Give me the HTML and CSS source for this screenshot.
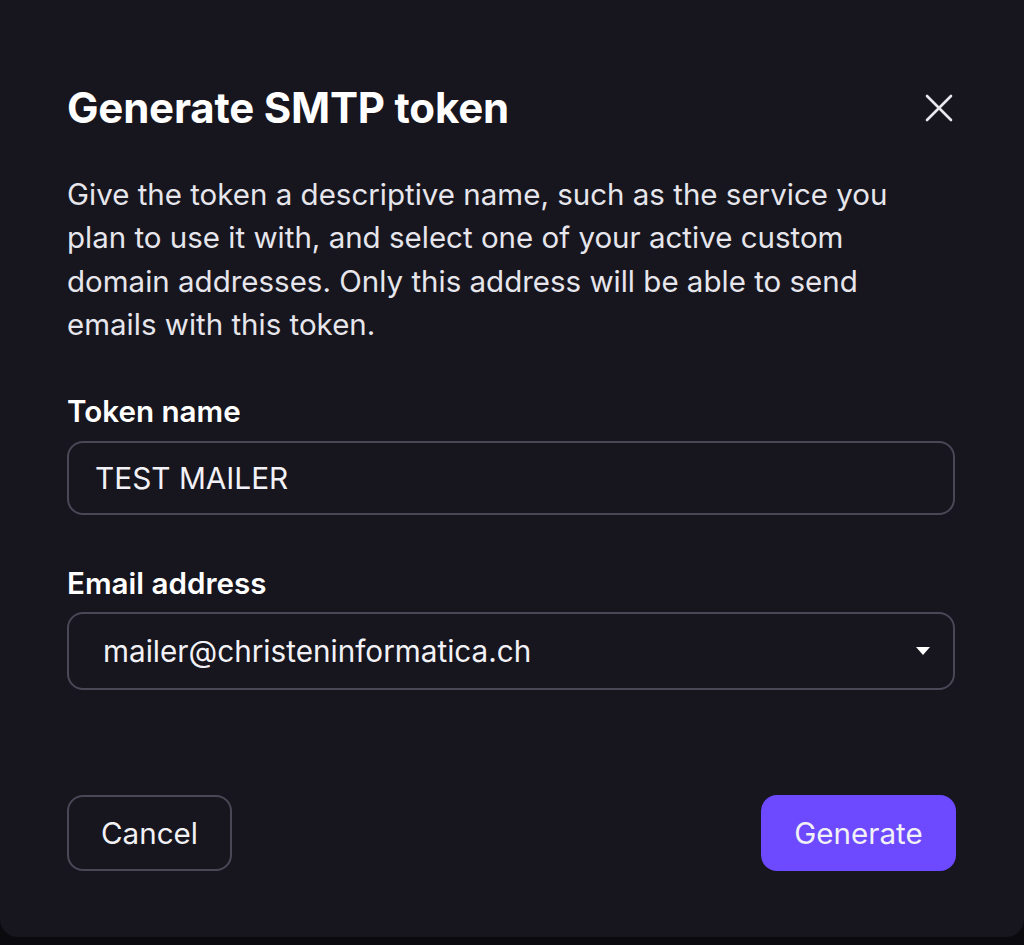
FILE: index.html
```html
<!DOCTYPE html>
<html lang="en">
<head>
<meta charset="utf-8">
<title>Generate SMTP token</title>
<link rel="stylesheet" href="styles.css">
</head>
<body>
<div class="dialog">
  <header class="dialog-header">
    <h1 class="dialog-title">Generate SMTP token</h1>
    <button class="close-btn" aria-label="Close">
      <svg width="30" height="30" viewBox="0 0 30 30"><path d="M3 3 L27 27 M27 3 L3 27" stroke="#e8e8ee" stroke-width="2.6" stroke-linecap="round" fill="none"/></svg>
    </button>
  </header>
  <p class="dialog-desc">Give the token a descriptive name, such as the service you plan to use it with, and select one of your active custom domain addresses. Only this address will be able to send emails with this token.</p>
  <label class="field-label" for="tname">Token name</label>
  <div class="input-box" id="tname">TEST MAILER</div>
  <label class="field-label label-email">Email address</label>
  <div class="select-box">
    <span class="select-value">mailer@christeninformatica.ch</span>
    <svg class="caret" width="16" height="10" viewBox="0 0 16 10"><path d="M1 1 H15 L8 9 Z" fill="#ffffff"/></svg>
  </div>
  <footer class="dialog-footer">
    <button class="btn btn-outline">Cancel</button>
    <button class="btn btn-primary">Generate</button>
  </footer>
</div>
</body>
</html>
```
FILE: styles.css
```css
* { box-sizing: border-box; }
html, body { margin: 0; padding: 0; }
body {
  background: #0b0a0f;
  font-family: Inter, "Noto Sans", sans-serif;
  color: #ececf1;
  height: 945px;
  overflow: hidden;
}
.dialog {
  background: #17151e;
  height: 937px;
  border-radius: 0 0 18px 18px;
  padding: 84px 69px 0 67px;
  display: flex;
  flex-direction: column;
}
.dialog-header {
  display: flex;
  align-items: center;
  justify-content: space-between;
  height: 48px;
}
.dialog-title {
  margin: 0;
  font-size: 42px;
  font-weight: 700;
  line-height: 48px;
  color: #ffffff;
  letter-spacing: -0.2px;
}
.close-btn {
  background: none;
  border: 0;
  padding: 0;
  margin-right: 1px;
  width: 30px;
  height: 30px;
  display: flex;
}
.dialog-desc {
  margin: 41px 0 0;
  font-size: 29.5px;
  line-height: 43.3px;
  color: #e6e6ec;
  max-width: 845px;
}
.field-label {
  display: block;
  margin-top: 45px;
  font-size: 29.6px;
  font-weight: 600;
  line-height: 40px;
  color: #ffffff;
}
.label-email { margin-top: 48px; }
.input-box {
  margin-top: 10px;
  height: 74px;
  border: 2px solid #4a4856;
  border-radius: 16px;
  padding: 0 26px;
  display: flex;
  align-items: center;
  font-size: 29.8px;
  color: #f2f2f6;
}
.select-box {
  margin-top: 9px;
  height: 78px;
  border: 2px solid #4a4856;
  border-radius: 16px;
  padding: 0 22px 0 34px;
  display: flex;
  align-items: center;
  justify-content: space-between;
  font-size: 29.7px;
  color: #f2f2f6;
}
.caret { margin-right: 0; }
.dialog-footer {
  margin-top: 105px;
  display: flex;
  justify-content: space-between;
}
.btn {
  height: 76px;
  border-radius: 16px;
  font-family: inherit;
  font-size: 29.6px;
  color: #f2f2f6;
  padding: 0;
}
.btn-outline {
  width: 165px;
  background: transparent;
  border: 2px solid #4a4856;
}
.btn-primary {
  width: 195px;
  background: #6d4aff;
  border: 0;
  margin-right: -1px;
}
```
